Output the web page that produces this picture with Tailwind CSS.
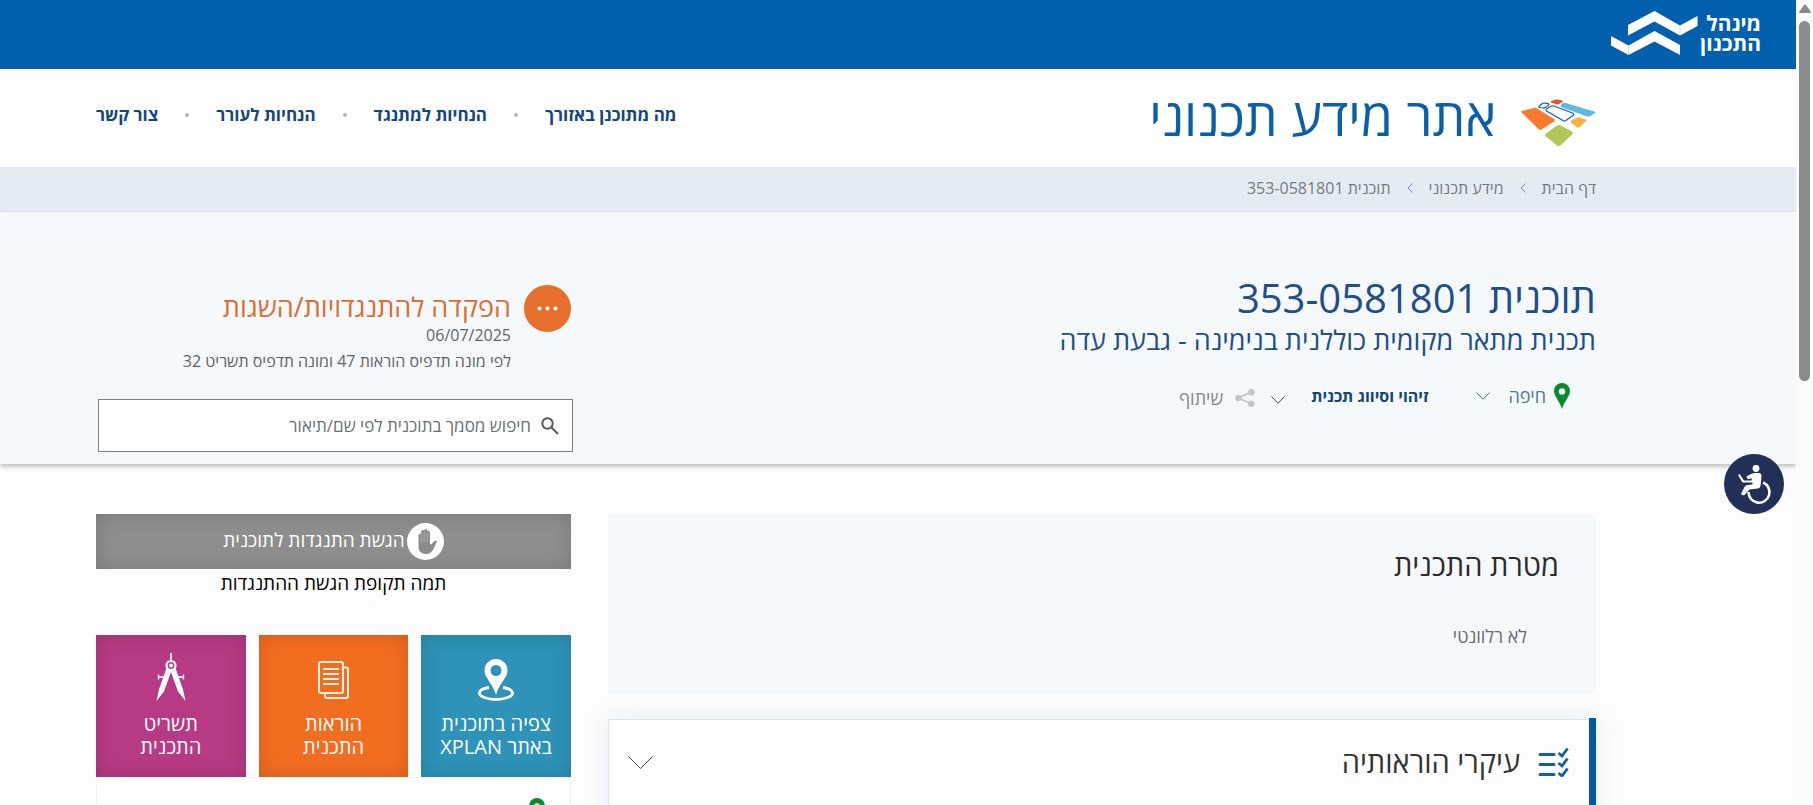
<!DOCTYPE html>
<html lang="he" dir="rtl">
  <head>
    <meta charset="UTF-8" />
    <meta name="viewport" content="width=device-width, initial-scale=1.0" />
    <script src="https://cdn.jsdelivr.net/npm/@tailwindcss/browser@4"></script>
    <title>תוכנית 353-0581801</title>
  </head>
  <body
    class="h-screen overflow-hidden flex bg-[#fdfdfd] font-['Open_Sans','Noto_Sans',sans-serif] text-[#5f6368]"
  >
    <!-- Scrollbar -->
    <div class="w-[17px] shrink-0 h-full bg-[#fbfbfb] flex flex-col items-center gap-2 pt-1">
      <svg class="w-3 h-[9px] fill-[#8b8b8b] shrink-0" viewBox="0 0 12 9">
        <path d="M6 0.5Q6.6.5 7 1L11.7 7.4Q12.2 9 11 9H1Q-.2 9 .3 7.4L5 1Q5.4.5 6 .5z" />
      </svg>
      <div class="w-[11px] h-[45%] rounded-full bg-[#8b8b8b]"></div>
    </div>

    <div class="flex-1 min-w-0 h-full overflow-hidden">
      <!-- Top bar -->
      <div class="bg-[#0060ae] h-[69px] pr-[35px] pb-1 flex items-center">
        <a href="#" class="flex items-center gap-[2px] text-white font-bold text-[21px] leading-5">
          <span>מינהל<br />התכנון</span>
          <svg class="w-[87px] h-11 fill-white" viewBox="0 0 87 44">
            <path
              d="M17 14L43.5 0 69 14.500 86.500 5V15L69 24.500 43.500 10.500 17 24.500zM0 25L17.500 34.500 43.500 20 69 34V44L43.500 30.500 17.500 44 0 34.500z"
            />
            <path d="M69 14.500V24M17.500 34.500V44" stroke="#9dbfe0" stroke-width=".6" />
          </svg>
        </a>
      </div>

      <!-- Header -->
      <header class="bg-white h-[98px] pr-[200px] pl-24 flex justify-between">
        <a href="#" class="flex items-center gap-6">
          <svg class="w-[76px] h-12 mt-[10px]" viewBox="0 0 76 48">
            <path d="M1.500 13.500Q.5 12.500 2 12L14 9Q15.500 8.500 17 9.500L34 20Q35.500 21 34 22.500L21.500 30.500Q20 31.500 18.500 30z" fill="#fb7a2c" />
            <path d="M42 4.500Q43.500 3.500 45.500 4L74 12.500Q76.500 13.500 74.500 14.500L70.500 17Q69 18 67 17.500L42 8.500Q40 7.500 41 6z" fill="#5cbadd" />
            <path d="M31 3.500Q30 2.800 31.500 2L35 .7Q36 .3 37.500 .6L42 1.600Q43.500 2 42.500 3L39 5Q38 5.600 36.500 5.300z" fill="#e8502a" />
            <path d="M51 23.500Q50 22.500 51.500 21.500L57 18.800Q58.500 18 60 18.600L65.500 20.500Q67 21.200 66 22.300L59.500 28Q58.500 29 57 28.300z" fill="#fbb040" />
            <path d="M25.500 37Q24.500 35.500 26 34.500L37 26.500Q39 25.500 41 26.500L52 32.500Q53.500 33.500 52.500 35L41 46Q39 48 37 46.500z" fill="#b1c757" />
            <g fill="#fff" stroke="#17639f" stroke-width="1.200">
              <path d="M19 7.200L22.500 4.500Q23.500 3.800 25 4.100L28 4.600Q29.500 5 28.500 6L25.500 8.600Q24.500 9.300 23 9L20 8.500Q18.500 8.200 19 7.200z" />
              <path d="M27 9.800L31 7.200Q32 6.500 34 7L52.500 14Q54.500 15 53 16.200L46 21.500Q44.500 22.500 43 21.500L26.500 12Q25.500 11 27 9.800z" />
            </g>
          </svg>
          <span class="pb-1 text-[52px] leading-[60px] text-[#0b5ea8]">אתר מידע תכנוני</span>
        </a>
        <nav class="flex items-center gap-[27px] pb-[6px] text-[17px] leading-6 font-bold text-[#14467b]">
          <a href="#">מה מתוכנן באזורך</a>
          <span class="size-1 rounded-full bg-[#a9b9c8]"></span>
          <a href="#">הנחיות למתנגד</a>
          <span class="size-1 rounded-full bg-[#a9b9c8]"></span>
          <a href="#">הנחיות לעורר</a>
          <span class="size-1 rounded-full bg-[#a9b9c8]"></span>
          <a href="#">צור קשר</a>
        </nav>
      </header>

      <!-- Breadcrumbs -->
      <nav
        class="bg-[#e4ebf3] border-b border-[#dbe3ea] h-[45px] pr-[200px] pb-[2px] flex items-center gap-4 text-base leading-6 text-[#777b7e]"
      >
        <a href="#">דף הבית</a>
        <svg class="w-[6px] h-[10px] fill-none stroke-[#6d93b5]" viewBox="0 0 6 10"><path d="M5.500 .5L1 5l4.500 4.500" /></svg>
        <a href="#">מידע תכנוני</a>
        <svg class="w-[6px] h-[10px] fill-none stroke-[#6d93b5]" viewBox="0 0 6 10"><path d="M5.500 .5L1 5l4.500 4.500" /></svg>
        <span>תוכנית 353-0581801</span>
      </nav>

      <!-- Plan summary -->
      <section
        class="relative bg-[#f5f9fc] h-[252px] pr-[200px] pl-24 flex justify-between shadow-[0_3px_4px_rgba(0,0,0,0.22)]"
      >
        <div class="pt-[60px]">
          <h1 class="text-[40px] leading-[52px] text-[#1d4f8b]">תוכנית 353-0581801</h1>
          <h2 class="text-[27px] leading-8 text-[#1d4f8b]">תכנית מתאר מקומית כוללנית בנימינה - גבעת עדה</h2>
          <div class="flex items-center mt-6 pr-[26px] text-lg leading-7">
            <button type="button" class="flex items-center text-[#4d7a9e]">
              <svg class="w-4 h-[26px] ml-2" viewBox="0 0 16 26">
                <path d="M8 0a8 8 0 0 1 8 8c0 5-5 9-8 18C5 17 0 13 0 8a8 8 0 0 1 8-8zm0 5.200a3.200 3.200 0 1 0 0 6.400 3.200 3.200 0 0 0 0-6.400z" fill="#0a8a2c" />
              </svg>
              חיפה
              <svg class="w-[14px] h-2 mr-[18px] fill-none stroke-[#3a6f9c]" viewBox="0 0 14 8"><path d="M.5.500L7 7.200 13.500.5" /></svg>
            </button>
            <button type="button" class="flex items-center mr-12 font-bold text-base text-[#0f4873]">
              זיהוי וסיווג תכנית
              <svg class="w-[14px] h-2 mr-[26px] mt-2 fill-none stroke-[#1d4f7b]" viewBox="0 0 14 8"><path d="M.5.500L7 7.200 13.500.5" /></svg>
            </button>
            <button type="button" class="flex items-center mr-4 pt-1 text-[#808a90]">
              <svg class="w-5 h-[18px] ml-3 fill-[#bfc6cc]" viewBox="0 0 20 18">
                <path d="M16 3L3.500 9 16 15" fill="none" stroke="#bfc6cc" stroke-width="1.600" />
                <circle cx="16.300" cy="3.300" r="3.300" />
                <circle cx="3.500" cy="9" r="3.300" />
                <circle cx="16.300" cy="14.700" r="3.300" />
              </svg>
              שיתוף
            </button>
          </div>
        </div>
        <div class="w-[475px] pt-[73px]">
          <div class="flex gap-[13px]">
            <svg class="size-[47px] shrink-0" viewBox="0 0 47 47">
              <circle cx="23.500" cy="23.500" r="23.500" fill="#e66f2c" />
              <g fill="#fff">
                <circle cx="15.500" cy="23.500" r="2" />
                <circle cx="23.500" cy="23.500" r="2" />
                <circle cx="31.500" cy="23.500" r="2" />
              </g>
            </svg>
            <div class="pt-[6px]">
              <h3 class="text-[27px] leading-8 text-[#dc6d33]">הפקדה להתנגדויות/השגות</h3>
              <p class="text-base leading-6">06/07/2025</p>
              <p class="text-base leading-7">לפי מונה תדפיס הוראות 47 ומונה תדפיס תשריט 32</p>
            </div>
          </div>
          <label
            class="flex items-center h-[53px] -mr-[2px] ml-[2px] mt-6 px-[13px] gap-[10px] bg-white border border-[#7b8287]"
          >
            <svg class="size-[18px] shrink-0 fill-none stroke-[#555a5e] stroke-2" viewBox="0 0 18 18">
              <circle cx="6.500" cy="6.500" r="5.200" />
              <path d="M10.500 10.500L17 17" />
            </svg>
            <input
              type="text"
              aria-label="חיפוש מסמך"
              placeholder="חיפוש מסמך בתוכנית לפי שם/תיאור"
              class="flex-1 min-w-0 text-[17px] leading-6 outline-none placeholder:text-[#6b7073]"
            />
          </label>
        </div>
        <!-- Accessibility button -->
        <button
          type="button"
          aria-label="נגישות"
          class="absolute -bottom-[50px] right-3 size-[60px] rounded-full bg-[#222f57]"
        >
          <svg class="size-[60px]" viewBox="0 0 60 60">
            <circle cx="32" cy="14.500" r="3.400" fill="#fff" />
            <path
              d="M26 20.500Q28 19 31 19h3.500Q38 19 37.500 22.500L36.500 32Q36 34.500 33.500 34.500L25.500 35.500 20.500 41Q18.500 42 17 40L20.500 33Q21.500 31 23.500 31L28.500 30.500V28.500L18.500 28.500 14 21 15.500 20 20 26.500H27.500L28 24.500 23.500 25 22.500 22.500z"
              fill="#fff"
            />
            <path d="M39 28.500A10.500 10.500 0 1 1 24.500 38" fill="none" stroke="#fff" stroke-width="2.600" />
          </svg>
        </button>
      </section>

      <!-- Content -->
      <main class="pr-[200px] pl-24 pt-[50px] flex gap-[37px]">
        <div class="flex-1 min-w-0">
          <section class="bg-[#f5f9fc] h-[180px] px-[37px] pt-[31px]">
            <h2 class="text-[29px] leading-10 text-[#2b2b2b]">מטרת התכנית</h2>
            <p class="text-lg leading-6 text-[#6b6b6b] mt-[39px] pr-8">לא רלוונטי</p>
          </section>
          <section
            class="mt-[25px] h-[120px] bg-[#fdfdfd] border-t border-l border-[#dfe4ee] shadow-[0_0_24px_rgba(70,100,170,0.13)] flex"
          >
            <div class="w-[7px] -mt-[2px] bg-[#0058a6]"></div>
            <button type="button" class="flex-1 h-[86px] pr-5 pl-[19px] pb-[2px] flex items-center">
              <svg class="w-[31px] h-[30px] fill-none stroke-[#12609f]" viewBox="0 0 31 30">
                <path d="M2 7.500h14M2 17.500h14M2 27.500h14" stroke-width="3" stroke-linecap="round" />
                <path d="M20.500 6l3.500 3L29.500 1.500M20.500 16l3.500 3 5.500-7.500M20.500 26l3.500 3 5.500-7.500" stroke-width="2.800" />
              </svg>
              <span class="mr-[18px] text-[29px] leading-10 text-[#333]">עיקרי הוראותיה</span>
              <svg class="w-[25px] h-[13px] mr-auto fill-none stroke-[#444]" viewBox="0 0 25 13"><path d="M.5.500l12 12 12-12" /></svg>
            </button>
          </section>
        </div>

        <aside class="w-[475px] shrink-0">
          <button
            type="button"
            class="w-full h-[55px] bg-[#8e8e8e] text-white text-[19px] leading-7 flex items-center justify-center gap-[2px] shadow-[inset_0_0_20px_rgba(0,0,0,0.15)]"
          >
            <svg class="size-[37px]" viewBox="0 0 37 37">
              <circle cx="18.500" cy="18.500" r="18.500" fill="#fff" />
              <path
                d="M11.500 12.500Q11.500 10.500 12.800 10.500T14.200 12V8.500Q14.200 7 15.700 7T17.200 8.500V7.500Q17.200 6 18.700 6T20.200 7.500V9Q20.200 7.500 21.500 7.500T22.900 9V20.500L24.500 21.500 27 18.500Q28.500 17 30 18.300L26.500 26Q24 31 19 31 11.500 31 11.500 24z"
                fill="#8b8b8b"
              />
              <path d="M14.200 12v7M17.200 9v10M20.200 9v10" stroke="#c4c4c4" stroke-width=".7" />
            </svg>
            <span class="pb-1">הגשת התנגדות לתוכנית</span>
          </button>
          <p class="text-[19px] leading-7 text-black text-center">תמה תקופת הגשת ההתנגדות</p>

          <div class="grid grid-cols-3 gap-[13px] mt-[38px] text-center text-xl leading-[23px] text-white">
            <a
              href="#"
              class="h-[142px] pt-[18px] bg-[#2d93b8] flex flex-col items-center shadow-[inset_0_0_20px_rgba(0,0,0,0.15)]"
            >
              <svg class="w-9 h-12 mb-[11px]" viewBox="0 0 36 48">
                <path d="M18 6a11.500 11.500 0 0 1 11.500 11.500C29.500 25 22 29 18 42 14 29 6.500 25 6.500 17.500A11.500 11.500 0 0 1 18 6zm0 6a5.500 5.500 0 1 0 0 11 5.500 5.500 0 0 0 0-11z" fill="#fff" />
                <path d="M11 34.500C5 35.500 1.500 37.500 1.500 40c0 3.500 7.500 6.500 16.500 6.500S34.500 43.500 34.500 40c0-2.500-3.500-4.500-9.500-5.500" fill="none" stroke="#fff" stroke-width="2.800" />
              </svg>
              <span>צפיה בתוכנית<br />באתר XPLAN</span>
            </a>
            <a
              href="#"
              class="h-[142px] pt-[18px] bg-[#f36d20] flex flex-col items-center shadow-[inset_0_0_20px_rgba(0,0,0,0.15)]"
            >
              <svg class="w-8 h-12 mb-[11px] fill-none stroke-[#fff3e6] stroke-2" viewBox="0 0 32 48">
                <rect x="1" y="9" width="24" height="31" rx="2" />
                <path d="M25 14.500h3q2 0 2 2V43q0 2-2 2H9q-2 0-2-2v-3M5 16h16M5 21h16M5 26h16M5 31h16" />
              </svg>
              <span>הוראות<br />התכנית</span>
            </a>
            <a
              href="#"
              class="h-[142px] pt-[18px] bg-[#b73a84] flex flex-col items-center shadow-[inset_0_0_20px_rgba(0,0,0,0.15)]"
            >
              <svg class="w-[30px] h-12 mb-[11px]" viewBox="0 0 30 48">
                <path
                  d="M14.200 0h1.600v7h-1.600zM10.500 15h9L27 36.500 29.500 48 22 38.500 15 19 8 38.500.5 48 3 36.500z"
                  fill="#fff"
                />
                <path d="M2.500 24h6M21.500 24h6M2.500 21.500v5M27.500 21.500v5" stroke="#fff" stroke-width="1.300" />
                <circle cx="15" cy="12.500" r="4.500" fill="#b73a84" stroke="#fff" stroke-width="2.200" />
                <circle cx="15" cy="12.500" r="1.900" fill="#fff" />
              </svg>
              <span>תשריט<br />התכנית</span>
            </a>
          </div>
          <div class="h-[60px] bg-white border border-[#f3f3f5] pt-5 pr-[25px]">
            <svg class="w-4 h-[26px]" viewBox="0 0 16 26">
              <path d="M8 0a8 8 0 0 1 8 8c0 5-5 9-8 18C5 17 0 13 0 8a8 8 0 0 1 8-8zm0 5.200a3.200 3.200 0 1 0 0 6.400 3.200 3.200 0 0 0 0-6.400z" fill="#0a8a2c" />
            </svg>
          </div>
        </aside>
      </main>
    </div>
  </body>
</html>
